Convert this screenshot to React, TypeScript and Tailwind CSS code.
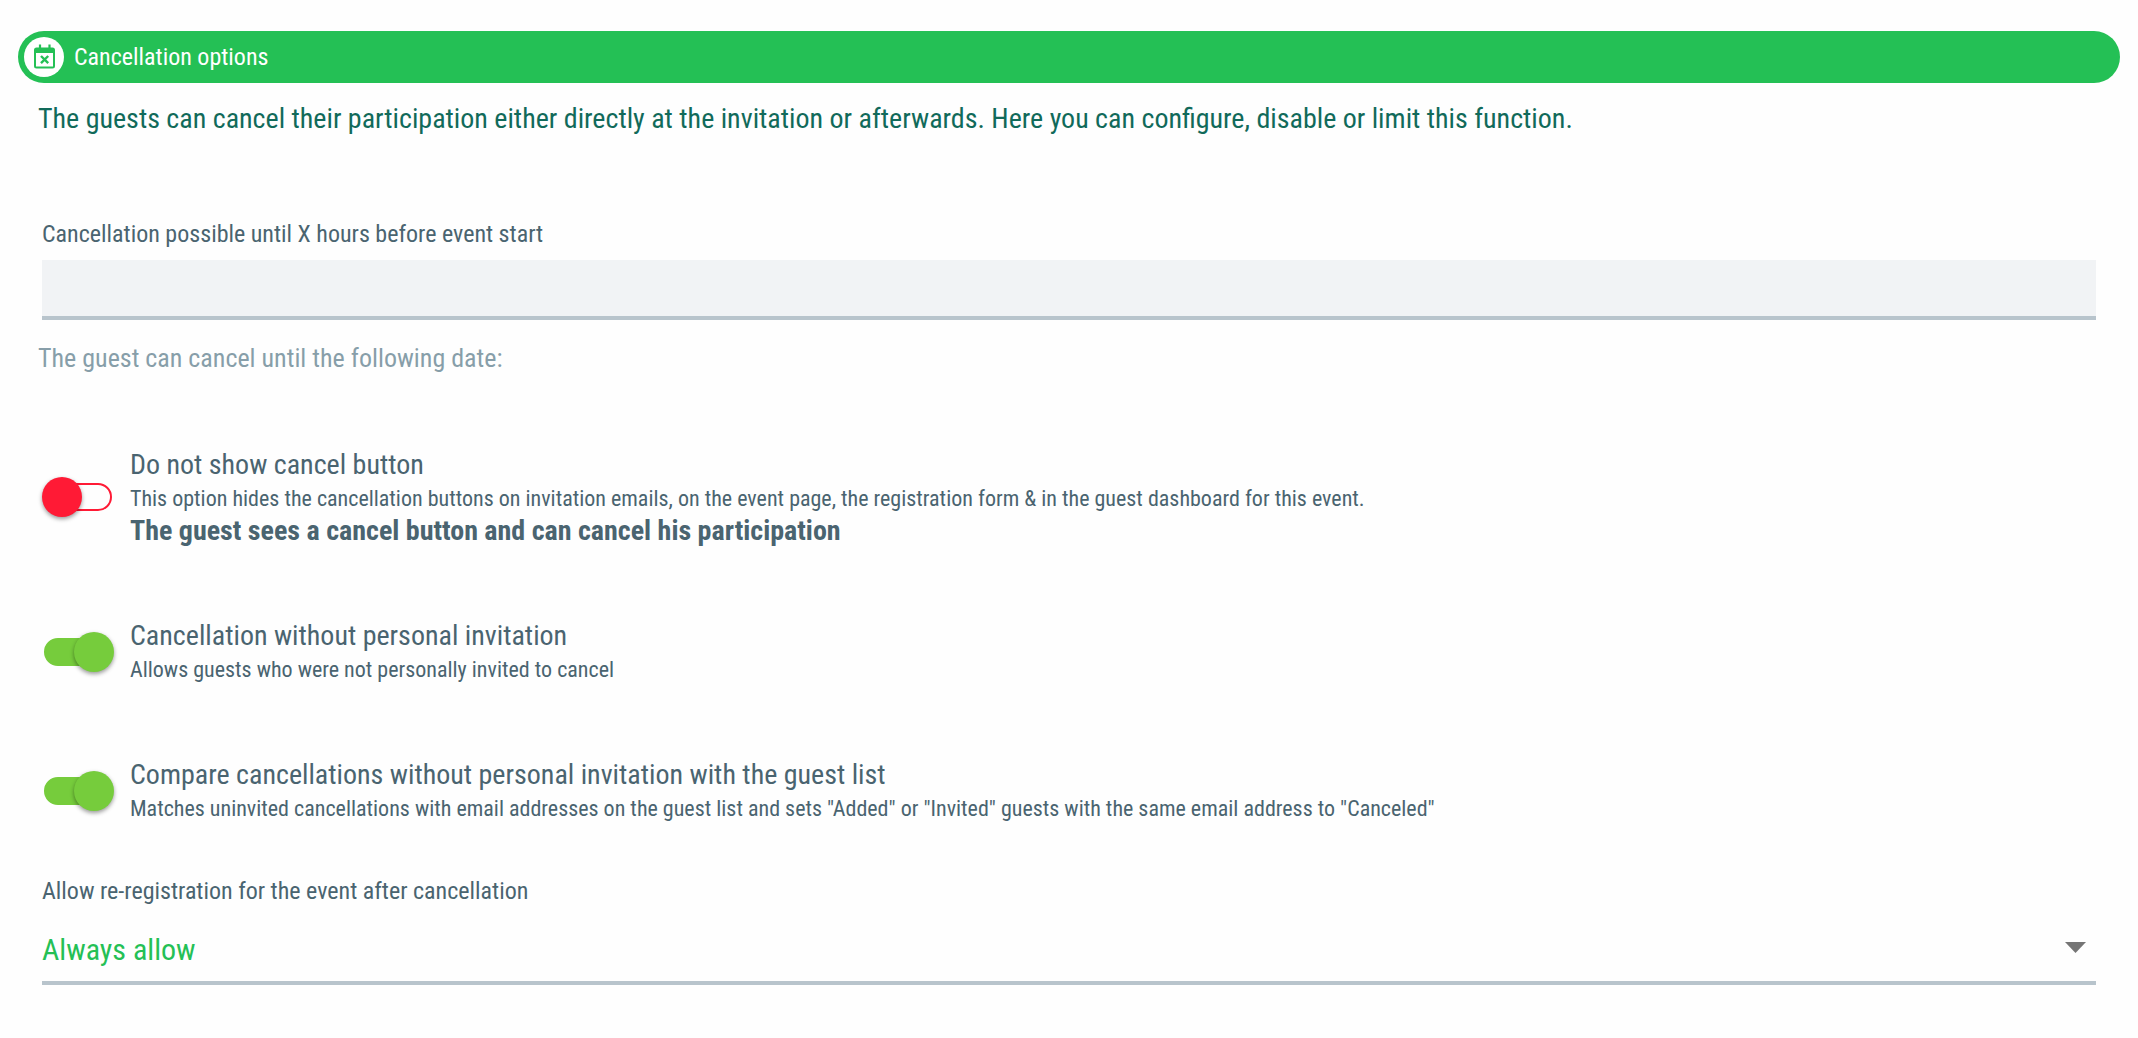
import React, { useState } from "react";

const toggleArr = [
    {
        id: "hide-cancel",
        title: "Do not show cancel button",
        description: "This option hides the cancellation buttons on invitation emails, on the event page, the registration form & in the guest dashboard for this event.",
        status: "The guest sees a cancel button and can cancel his participation",
        on: false
    },
    {
        id: "without-invitation",
        title: "Cancellation without personal invitation",
        description: "Allows guests who were not personally invited to cancel",
        on: true
    },
    {
        id: "compare-list",
        title: "Compare cancellations without personal invitation with the guest list",
        description: "Matches uninvited cancellations with email addresses on the guest list and sets \"Added\" or \"Invited\" guests with the same email address to \"Canceled\"",
        on: true
    }
];

const CalendarIcon = () => (
    <svg className="size-[26px]" viewBox="0 0 26 26" fill="none" stroke="#24c055">
        <path d="M5.500 3.500h16a2.500 2.500 0 0 1 2.500 2.500v16a2.500 2.500 0 0 1-2.500 2.500h-16A2.500 2.500 0 0 1 3 22V6a2.500 2.500 0 0 1 2.500-2.500zM5 9v13.500h17V9z" fill="#24c055" fillRule="evenodd" stroke="none" />
        <path d="M9 0.500v4M18.500 0.500v4" strokeWidth="2.200" />
        <path d="M10 12l7.200 7.200M17.200 12L10 19.200" strokeWidth="2.400" />
    </svg>
);

const App = () => {
    const [hours, setHours] = useState("");
    const [values, setValues] = useState(toggleArr.map((item) => item.on));

    const toggle = (index: number) => {
        setValues(values.map((value, i) => (i === index ? !value : value)));
    };

    return (
        <main className="min-h-screen bg-[#fefefe] px-[18px] pt-[31px] pb-12 font-['Roboto_Condensed','Liberation_Sans_Narrow',Roboto,sans-serif] text-[#4a6470]">
            <h2 className="flex h-[52px] items-center gap-[10px] rounded-full bg-[#24c055] px-[6px] text-2xl text-white">
                <span className="flex size-10 items-center justify-center rounded-full bg-white">
                    <CalendarIcon />
                </span>
                Cancellation options
            </h2>
            <p className="mt-4 px-5 text-[28px] leading-10 text-[#116a5a]">
                The guests can cancel their participation either directly at the invitation or afterwards. Here you can configure, disable or limit this function.
            </p>

            <div className="mt-[79px] px-6">
                <label htmlFor="hours" className="block text-2xl leading-8">Cancellation possible until X hours before event start</label>
                <input
                    id="hours"
                    type="text"
                    value={hours}
                    onChange={(e) => setHours(e.target.value)}
                    className="mt-[10px] block h-[60px] w-full border-b-4 border-[#b8c4cc] bg-[#f1f3f5] px-3 text-[28px] outline-none"
                />
            </div>
            <p className="mt-5 px-5 text-[26px] leading-9 text-[#879ea9]">The guest can cancel until the following date:</p>

            <div className="mt-[71px] flex flex-col gap-[71px] px-6">
                {toggleArr.map((item, index) => {
                    return (
                        <div className="flex items-center gap-4" key={item.id}>
                            <span className="relative flex h-10 w-[72px] shrink-0 items-center">
                                <input
                                    id={item.id}
                                    type="checkbox"
                                    role="switch"
                                    checked={values[index]}
                                    onChange={() => toggle(index)}
                                    className="peer ml-[2px] h-7 w-[68px] cursor-pointer appearance-none rounded-full border-2 border-[#ff1a35] checked:border-[#76cc3c] checked:bg-[#76cc3c]"
                                />
                                <span className="pointer-events-none absolute left-0 size-10 rounded-full bg-[#ff1a35] shadow-[0_2px_4px_rgba(0,0,0,0.4)] peer-checked:left-8 peer-checked:bg-[#76cc3c]"></span>
                            </span>
                            <div>
                                <label htmlFor={item.id} className="block text-[28px] leading-9">{item.title}</label>
                                <p className="text-[22px] leading-8">{item.description}</p>
                                {item.status && <p className="text-[28px] leading-8 font-bold">{item.status}</p>}
                            </div>
                        </div>
                    );
                })}
            </div>

            <div className="mt-[50px] px-6">
                <label htmlFor="re-registration" className="block text-2xl leading-8">Allow re-registration for the event after cancellation</label>
                <div className="relative mt-3">
                    <select id="re-registration" className="block h-[66px] w-full appearance-none border-b-4 border-[#b8c4cc] pb-[2px] text-[30px] text-[#24c055] outline-none">
                        <option>Always allow</option>
                        <option>Never allow</option>
                    </select>
                    <svg className="pointer-events-none absolute top-[23px] right-[10px] h-[11px] w-[21px]" viewBox="0 0 21 11" fill="#757575">
                        <path d="M0 0h21L10.500 11z" />
                    </svg>
                </div>
            </div>
        </main>
    );
};

export default App;
